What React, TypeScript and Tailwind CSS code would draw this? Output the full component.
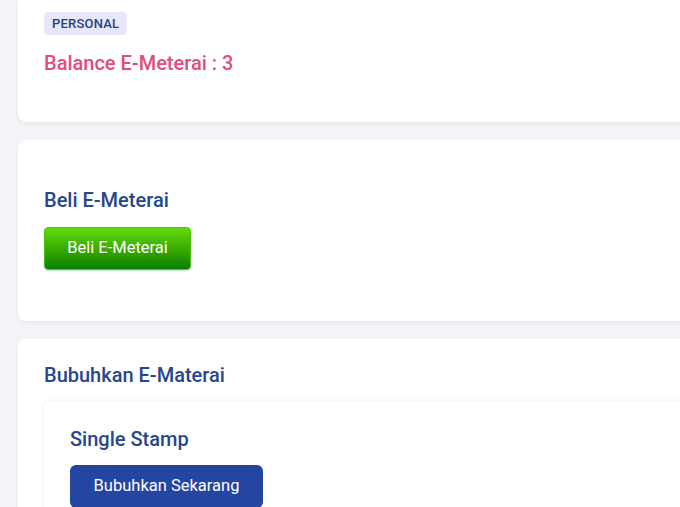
import React from "react";

export default function App() {
  return (
    <div
      className="w-[680px] h-[507px] overflow-hidden bg-[#f4f4f8]"
      style={{ fontFamily: "Roboto, 'Liberation Sans', sans-serif" }}
    >
      <div className="ml-[18px] w-[700px] flex flex-col gap-[18px]">
        {/* Card 1 */}
        <div className="bg-white rounded-b-lg shadow-[0_2px_4px_rgba(0,0,0,0.06)] px-[26px] pt-[11px] pb-[47px]">
          <span className="inline-flex items-center h-[23px] px-[8px] rounded-[4px] bg-[#e6e7fa] text-[13px] font-medium text-[#2d3e7a] tracking-[0.2px]">
            PERSONAL
          </span>
          <div className="mt-[16px] text-[20px] leading-[24px] font-medium text-[#e24b7e]">
            Balance E-Meterai : 3
          </div>
        </div>

        {/* Card 2 */}
        <div className="bg-white rounded-lg shadow-[0_2px_4px_rgba(0,0,0,0.06)] px-[26px] pt-[48px] pb-[51px]">
          <div className="text-[20px] leading-[24px] font-medium text-[#27468c]">Beli E-Meterai</div>
          <button className="mt-[15px] w-[147px] h-[43px] rounded-[4px] border border-[#4fc20c] bg-gradient-to-b from-[#62da0a] to-[#007f00] text-white text-[16.5px] shadow-[0_1px_2px_rgba(0,0,0,0.15)]">
            Beli E-Meterai
          </button>
        </div>

        {/* Card 3 */}
        <div className="bg-white rounded-lg shadow-[0_2px_4px_rgba(0,0,0,0.06)] px-[26px] pt-[24px] pb-[40px]">
          <div className="text-[20px] leading-[24px] font-medium text-[#27468c]">Bubuhkan E-Materai</div>
          <div className="mt-[15px] bg-white rounded-lg shadow-[0_0_6px_rgba(0,0,0,0.07)] px-[26px] pt-[25px] pb-[30px]">
            <div className="text-[20px] leading-[24px] font-medium text-[#27468c]">Single Stamp</div>
            <button className="mt-[14px] w-[193px] h-[43px] rounded-[6px] bg-[#2546a0] text-white text-[16.5px]">
              Bubuhkan Sekarang
            </button>
          </div>
        </div>
      </div>
    </div>
  );
}
